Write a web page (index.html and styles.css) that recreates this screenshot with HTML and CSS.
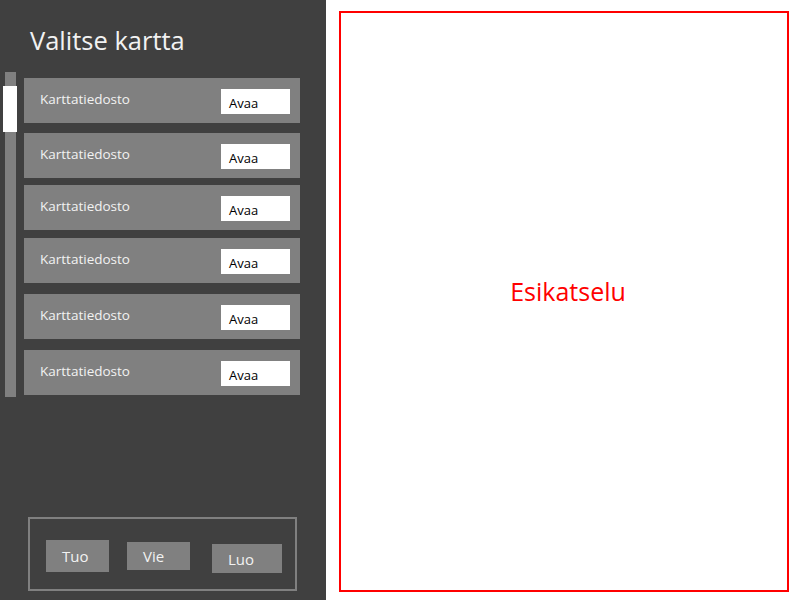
FILE: index.html
```html
<!DOCTYPE html>
<html lang="fi">
<head>
<meta charset="utf-8">
<title>Valitse kartta</title>
<link rel="stylesheet" href="styles.css">
</head>
<body>
<div class="app">
  <aside class="sidebar">
    <h1 class="title">Valitse kartta</h1>
    <div class="list-area">
      <div class="scroll-track"><div class="scroll-thumb"></div></div>
      <ul class="map-list">
        <li class="map-row"><span class="map-name">Karttatiedosto</span><button class="open-btn">Avaa</button></li>
        <li class="map-row"><span class="map-name">Karttatiedosto</span><button class="open-btn">Avaa</button></li>
        <li class="map-row"><span class="map-name">Karttatiedosto</span><button class="open-btn">Avaa</button></li>
        <li class="map-row"><span class="map-name">Karttatiedosto</span><button class="open-btn">Avaa</button></li>
        <li class="map-row"><span class="map-name">Karttatiedosto</span><button class="open-btn">Avaa</button></li>
        <li class="map-row"><span class="map-name">Karttatiedosto</span><button class="open-btn">Avaa</button></li>
      </ul>
    </div>
    <div class="actions">
      <button class="act act-tuo">Tuo</button>
      <button class="act act-vie">Vie</button>
      <button class="act act-luo">Luo</button>
    </div>
  </aside>
  <main class="main">
    <div class="preview"><span class="preview-label">Esikatselu</span></div>
  </main>
</div>
</body>
</html>
```
FILE: styles.css
```css
* { box-sizing: border-box; }
html, body { margin: 0; padding: 0; }
body {
  width: 800px;
  height: 600px;
  overflow: hidden;
  font-family: "Open Sans", "Noto Sans", sans-serif;
  background: #ffffff;
}
.app {
  display: flex;
  height: 600px;
}
.sidebar {
  width: 326px;
  flex: none;
  background: #404040;
  display: flex;
  flex-direction: column;
}
.title {
  margin: 0;
  padding: 25px 0 0 30px;
  height: 72px;
  font-size: 25.5px;
  line-height: 30px;
  font-weight: 400;
  color: #f2f2f2;
}
.list-area {
  display: flex;
  align-items: flex-start;
  padding-left: 5px;
}
.scroll-track {
  width: 11px;
  height: 325px;
  background: #808080;
  padding-top: 14px;
}
.scroll-thumb {
  width: 14px;
  height: 46px;
  margin-left: -2px;
  background: #ffffff;
}
.map-list {
  list-style: none;
  margin: 6px 0 0 8px;
  padding: 0;
  width: 276px;
}
.map-row {
  height: 45px;
  background: #808080;
  display: flex;
  align-items: flex-start;
  justify-content: space-between;
  padding: 0 10px 0 16px;
}
.map-row:nth-child(2) { margin-top: 10px; }
.map-row:nth-child(3) { margin-top: 7px; }
.map-row:nth-child(4) { margin-top: 8px; }
.map-row:nth-child(5) { margin-top: 11px; }
.map-row:nth-child(6) { margin-top: 11px; }
.map-name {
  color: #f2f2f2;
  font-size: 13.5px;
  line-height: 18px;
  margin-top: 12px;
}
.open-btn {
  margin-top: 11px;
  width: 69px;
  height: 25px;
  border: 0;
  background: #ffffff;
  color: #000000;
  font-family: inherit;
  font-size: 13px;
  text-align: left;
  padding: 3px 0 0 8px;
  line-height: 20px;
}
.actions {
  margin: auto 0 9px 28px;
  width: 269px;
  height: 74px;
  border: 2px solid #808080;
  display: flex;
  align-items: flex-start;
  padding-left: 16px;
}
.act {
  border: 0;
  background: #808080;
  color: #f2f2f2;
  font-family: inherit;
  font-size: 15px;
  text-align: left;
  padding: 0 0 0 16px;
}
.act-tuo { width: 63px; height: 32px; margin-top: 21px; line-height: 30px; }
.act-vie { width: 63px; height: 28px; margin-top: 23px; margin-left: 18px; line-height: 24px; }
.act-luo { width: 70px; height: 29px; margin-top: 25px; margin-left: 22px; line-height: 28px; }
.main {
  flex: 1;
  padding: 11px 11px 8px 13px;
  display: flex;
}
.preview {
  flex: 1;
  border: 2px solid #ff0000;
  display: flex;
  align-items: center;
  justify-content: center;
  padding: 0 0 22px 8px;
}
.preview-label {
  color: #ff0000;
  font-size: 25px;
}
```
